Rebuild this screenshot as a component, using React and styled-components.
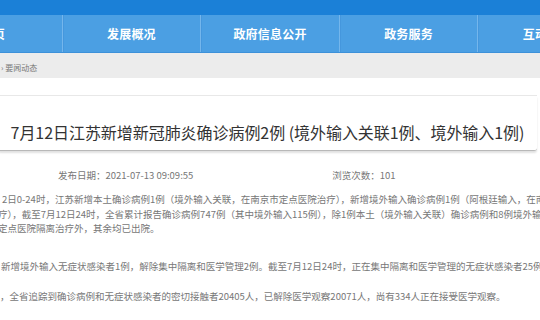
import React from "react";
import styled, { createGlobalStyle } from "styled-components";

const GlobalStyle = createGlobalStyle`
  html, body {
    margin: 0;
    padding: 0;
    background: #fff;
    overflow: hidden;
  }
  body {
    font-family: "Noto Sans CJK SC", "Noto Sans", sans-serif;
  }
`;

const navItems = ["首页", "发展概况", "政府信息公开", "政务服务", "互动交流"];

const paragraphs = [
  {
    gap: 0,
    lines: [
      { indent: 4, text: "2日0-24时，江苏新增本土确诊病例1例（境外输入关联，在南京市定点医院治疗），新增境外输入确诊病例1例（阿根廷输入，在南京市定点医院治疗）。" },
      { indent: 0, text: "疗），截至7月12日24时，全省累计报告确诊病例747例（其中境外输入115例），除1例本土（境外输入关联）确诊病例和8例境外输入确诊病例在" },
      { indent: 0, text: "定点医院隔离治疗外，其余均已出院。" },
    ],
  },
  {
    gap: 23,
    lines: [
      { indent: 3, text: "新增境外输入无症状感染者1例，解除集中隔离和医学管理2例。截至7月12日24时，正在集中隔离和医学管理的无症状感染者25例。" },
    ],
  },
  {
    gap: 16,
    lines: [
      { indent: 2, text: "，全省追踪到确诊病例和无症状感染者的密切接触者20405人，已解除医学观察20071人，尚有334人正在接受医学观察。" },
    ],
  },
];

export default function App() {
  return (
    <Viewport>
      <GlobalStyle />
      <Page>
        <TopBar />
        <Nav>
          {navItems.map((item, i) => (
            <NavItem key={item} $first={i === 0}>
              {item}
            </NavItem>
          ))}
        </Nav>
        <Breadcrumb>
          <Crumbs>› 要闻动态</Crumbs>
        </Breadcrumb>
        <Content>
          <Divider />
          <TitleBox>
            <Title>
              7月12日江苏新增新冠肺炎确诊病例2例 (境外输入关联1例、境外输入1例)
            </Title>
          </TitleBox>
          <MetaRow>
            <span>发布日期：2021-07-13 09:09:55</span>
            <span>浏览次数：101</span>
          </MetaRow>
          <Article>
            {paragraphs.map((p, i) => (
              <Paragraph key={i} $gap={p.gap}>
                {p.lines.map((line, j) => (
                  <Line key={j} $indent={line.indent}>
                    {line.text}
                  </Line>
                ))}
              </Paragraph>
            ))}
          </Article>
        </Content>
      </Page>
    </Viewport>
  );
}

const Viewport = styled.div`
  width: 540px;
  height: 320px;
  overflow: hidden;
`;

const Page = styled.div`
  width: 692px;
  margin-left: -76px;
`;

const TopBar = styled.div`
  height: 15px;
  background: #1b80d7;
`;

const Nav = styled.div`
  display: flex;
  height: 37px;
  background: #4b9fe3;
  border-bottom: 1px solid #3d91d9;
`;

const NavItem = styled.div`
  flex: 1;
  display: flex;
  align-items: center;
  justify-content: center;
  color: #fff;
  font-size: 12px;
  font-weight: 700;
  letter-spacing: 0.2px;
  border-left: ${(p) => (p.$first ? "none" : "1px solid #74b6ec")};
  box-shadow: ${(p) => (p.$first ? "none" : "inset 1px 0 0 #4597dd")};
`;

const Breadcrumb = styled.div`
  height: 25px;
  background: #ececec;
  display: flex;
  align-items: center;
`;

const Crumbs = styled.div`
  margin-left: 77px;
  margin-top: 3px;
  font-size: 8px;
  color: #777;
`;

const Content = styled.div`
  width: 539px;
  margin-left: 74px;
`;

const Divider = styled.div`
  margin-top: 17px;
  height: 1px;
  background: #e8e8e8;
`;

const TitleBox = styled.div`
  padding: 24px 0 6px;
  border-bottom: 1px solid #b8b8b8;
  border-radius: 0 0 3px 3px;
  box-shadow: 0 2px 2px rgba(0, 0, 0, 0.12);
  text-align: center;
`;

const Title = styled.h1`
  margin: 0;
  font-size: 16px;
  line-height: 24px;
  font-weight: 400;
  letter-spacing: -0.05px;
  color: #333;
  white-space: nowrap;
`;

const MetaRow = styled.div`
  display: flex;
  gap: 139px;
  margin-top: 17px;
  padding-left: 60px;
  font-size: 9.5px;
  line-height: 14px;
  color: #777;
`;

const Article = styled.div`
  margin-top: 10px;
`;

const Paragraph = styled.div`
  margin-top: ${(p) => p.$gap}px;
`;

const Line = styled.div`
  margin-left: ${(p) => p.$indent}px;
  white-space: nowrap;
  font-size: 9.5px;
  line-height: 14.5px;
  color: #777;
`;
